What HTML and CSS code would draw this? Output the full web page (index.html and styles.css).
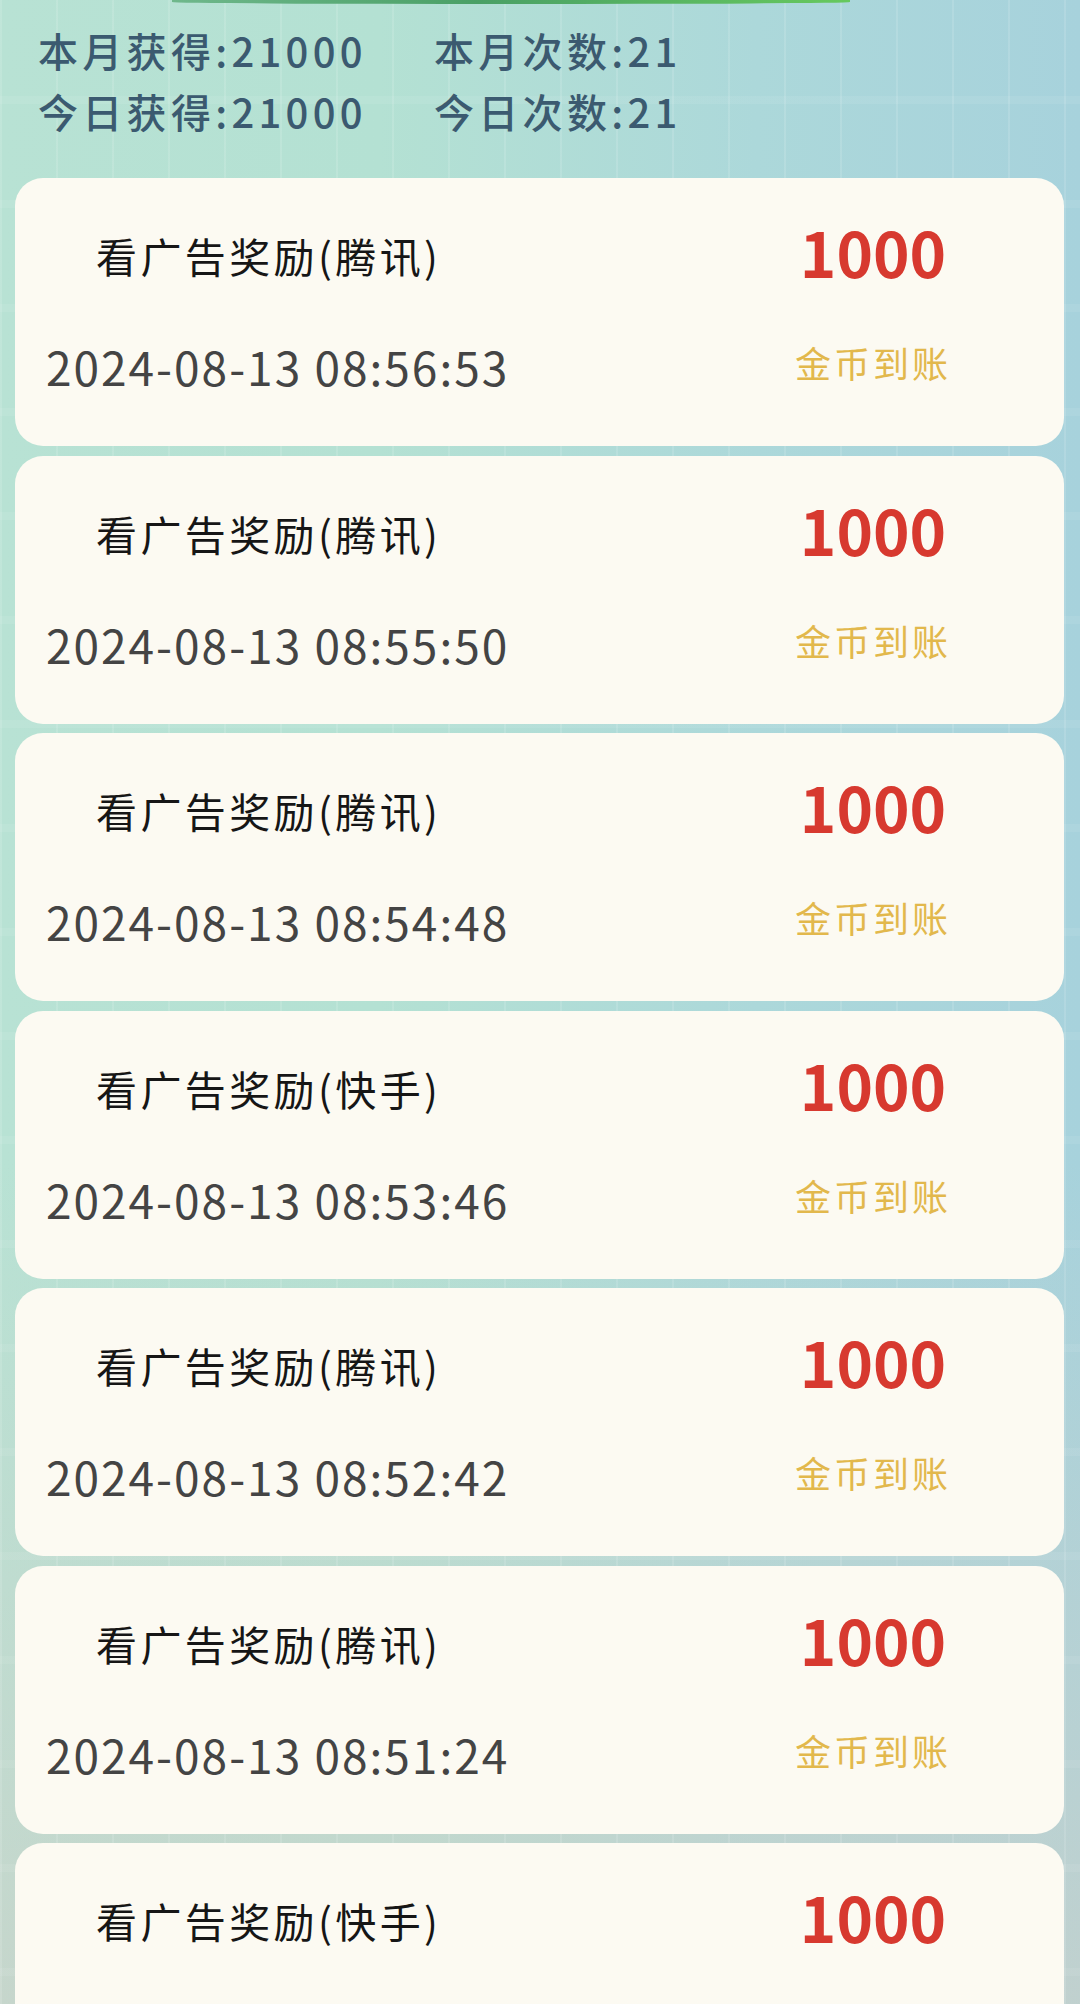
FILE: index.html
```html
<!DOCTYPE html>
<html lang="zh-CN">
<head>
    <meta charset="UTF-8">
    <meta name="viewport" content="width=device-width, initial-scale=1.0">
    <title>金币明细</title>
    <link rel="stylesheet" href="styles.css">
</head>
<body>
    <div class="page">
        <div class="header-edge"></div>

        <div class="stats">
            <div class="stat">本月获得:21000</div>
            <div class="stat">本月次数:21</div>
            <div class="stat">今日获得:21000</div>
            <div class="stat">今日次数:21</div>
        </div>

        <div class="record-list">
            <div class="record">
                <div class="record-left">
                    <div class="record-title">看广告奖励(腾讯)</div>
                    <div class="record-time">2024-08-13 08:56:53</div>
                </div>
                <div class="record-right">
                    <div class="record-amount">1000</div>
                    <div class="record-status">金币到账</div>
                </div>
            </div>

            <div class="record">
                <div class="record-left">
                    <div class="record-title">看广告奖励(腾讯)</div>
                    <div class="record-time">2024-08-13 08:55:50</div>
                </div>
                <div class="record-right">
                    <div class="record-amount">1000</div>
                    <div class="record-status">金币到账</div>
                </div>
            </div>

            <div class="record">
                <div class="record-left">
                    <div class="record-title">看广告奖励(腾讯)</div>
                    <div class="record-time">2024-08-13 08:54:48</div>
                </div>
                <div class="record-right">
                    <div class="record-amount">1000</div>
                    <div class="record-status">金币到账</div>
                </div>
            </div>

            <div class="record">
                <div class="record-left">
                    <div class="record-title">看广告奖励(快手)</div>
                    <div class="record-time">2024-08-13 08:53:46</div>
                </div>
                <div class="record-right">
                    <div class="record-amount">1000</div>
                    <div class="record-status">金币到账</div>
                </div>
            </div>

            <div class="record">
                <div class="record-left">
                    <div class="record-title">看广告奖励(腾讯)</div>
                    <div class="record-time">2024-08-13 08:52:42</div>
                </div>
                <div class="record-right">
                    <div class="record-amount">1000</div>
                    <div class="record-status">金币到账</div>
                </div>
            </div>

            <div class="record">
                <div class="record-left">
                    <div class="record-title">看广告奖励(腾讯)</div>
                    <div class="record-time">2024-08-13 08:51:24</div>
                </div>
                <div class="record-right">
                    <div class="record-amount">1000</div>
                    <div class="record-status">金币到账</div>
                </div>
            </div>

            <div class="record">
                <div class="record-left">
                    <div class="record-title">看广告奖励(快手)</div>
                    <div class="record-time">2024-08-13 08:50:19</div>
                </div>
                <div class="record-right">
                    <div class="record-amount">1000</div>
                    <div class="record-status">金币到账</div>
                </div>
            </div>
        </div>
    </div>
</body>
</html>
```

FILE: styles.css
```css
html, body {
    margin: 0;
    padding: 0;
}

body {
    font-family: "Noto Sans CJK SC", "Noto Sans", sans-serif;
    background-color: #b3dcd6;
    overflow: hidden;
}

.page {
    min-height: 2004px;
    background:
        repeating-linear-gradient(90deg, rgba(255, 255, 255, 0.12) 0 2px, transparent 2px 56px),
        repeating-linear-gradient(180deg, transparent 0 96px, rgba(255, 255, 255, 0.07) 96px 104px),
        linear-gradient(180deg, rgba(255, 255, 255, 0) 55%, rgba(205, 208, 200, 0.75) 100%),
        linear-gradient(90deg, #b8e2d4 0%, #b4e1d3 35%, #acd8da 70%, #a7d2dc 100%);
}

/* bottom edge of the green header above */
.header-edge {
    height: 4px;
    margin: 0 230px 0 172px;
    border-radius: 0 0 50% 50%;
    background: linear-gradient(90deg, #6fb88c 0%, #4aa066 45%, #66c95e 100%);
}

.stats {
    display: grid;
    grid-template-columns: 396px auto;
    padding: 16px 0 0 38px;
    margin-bottom: 36px;
}

.stat {
    font-size: 40px;
    font-weight: 500;
    line-height: 61px;
    letter-spacing: 4.3px;
    color: #3b5a70;
}

.record-list {
    padding: 0 16px 0 15px;
}

.record {
    display: flex;
    justify-content: space-between;
    height: 268px;
    margin-bottom: 9.5px;
    box-sizing: border-box;
    padding: 22px 91px 22px 0;
    background-color: #fcfaf2;
    border-radius: 28px;
}

.record-left {
    display: flex;
    flex-direction: column;
}

.record-title {
    height: 112px;
    line-height: 110px;
    padding-left: 81px;
    font-size: 41px;
    letter-spacing: 3.4px;
    color: #161616;
}

.record-time {
    height: 112px;
    line-height: 108px;
    padding-left: 31px;
    font-size: 46px;
    letter-spacing: 2px;
    color: #444444;
}

.record-right {
    display: flex;
    flex-direction: column;
    width: 200px;
    padding-bottom: 6px;
    text-align: center;
}

.record-amount {
    height: 106px;
    line-height: 102px;
    font-size: 62px;
    font-weight: bold;
    color: #d7392f;
}

.record-status {
    height: 112px;
    line-height: 112px;
    font-size: 36px;
    letter-spacing: 3px;
    color: #e2b84c;
}
```
